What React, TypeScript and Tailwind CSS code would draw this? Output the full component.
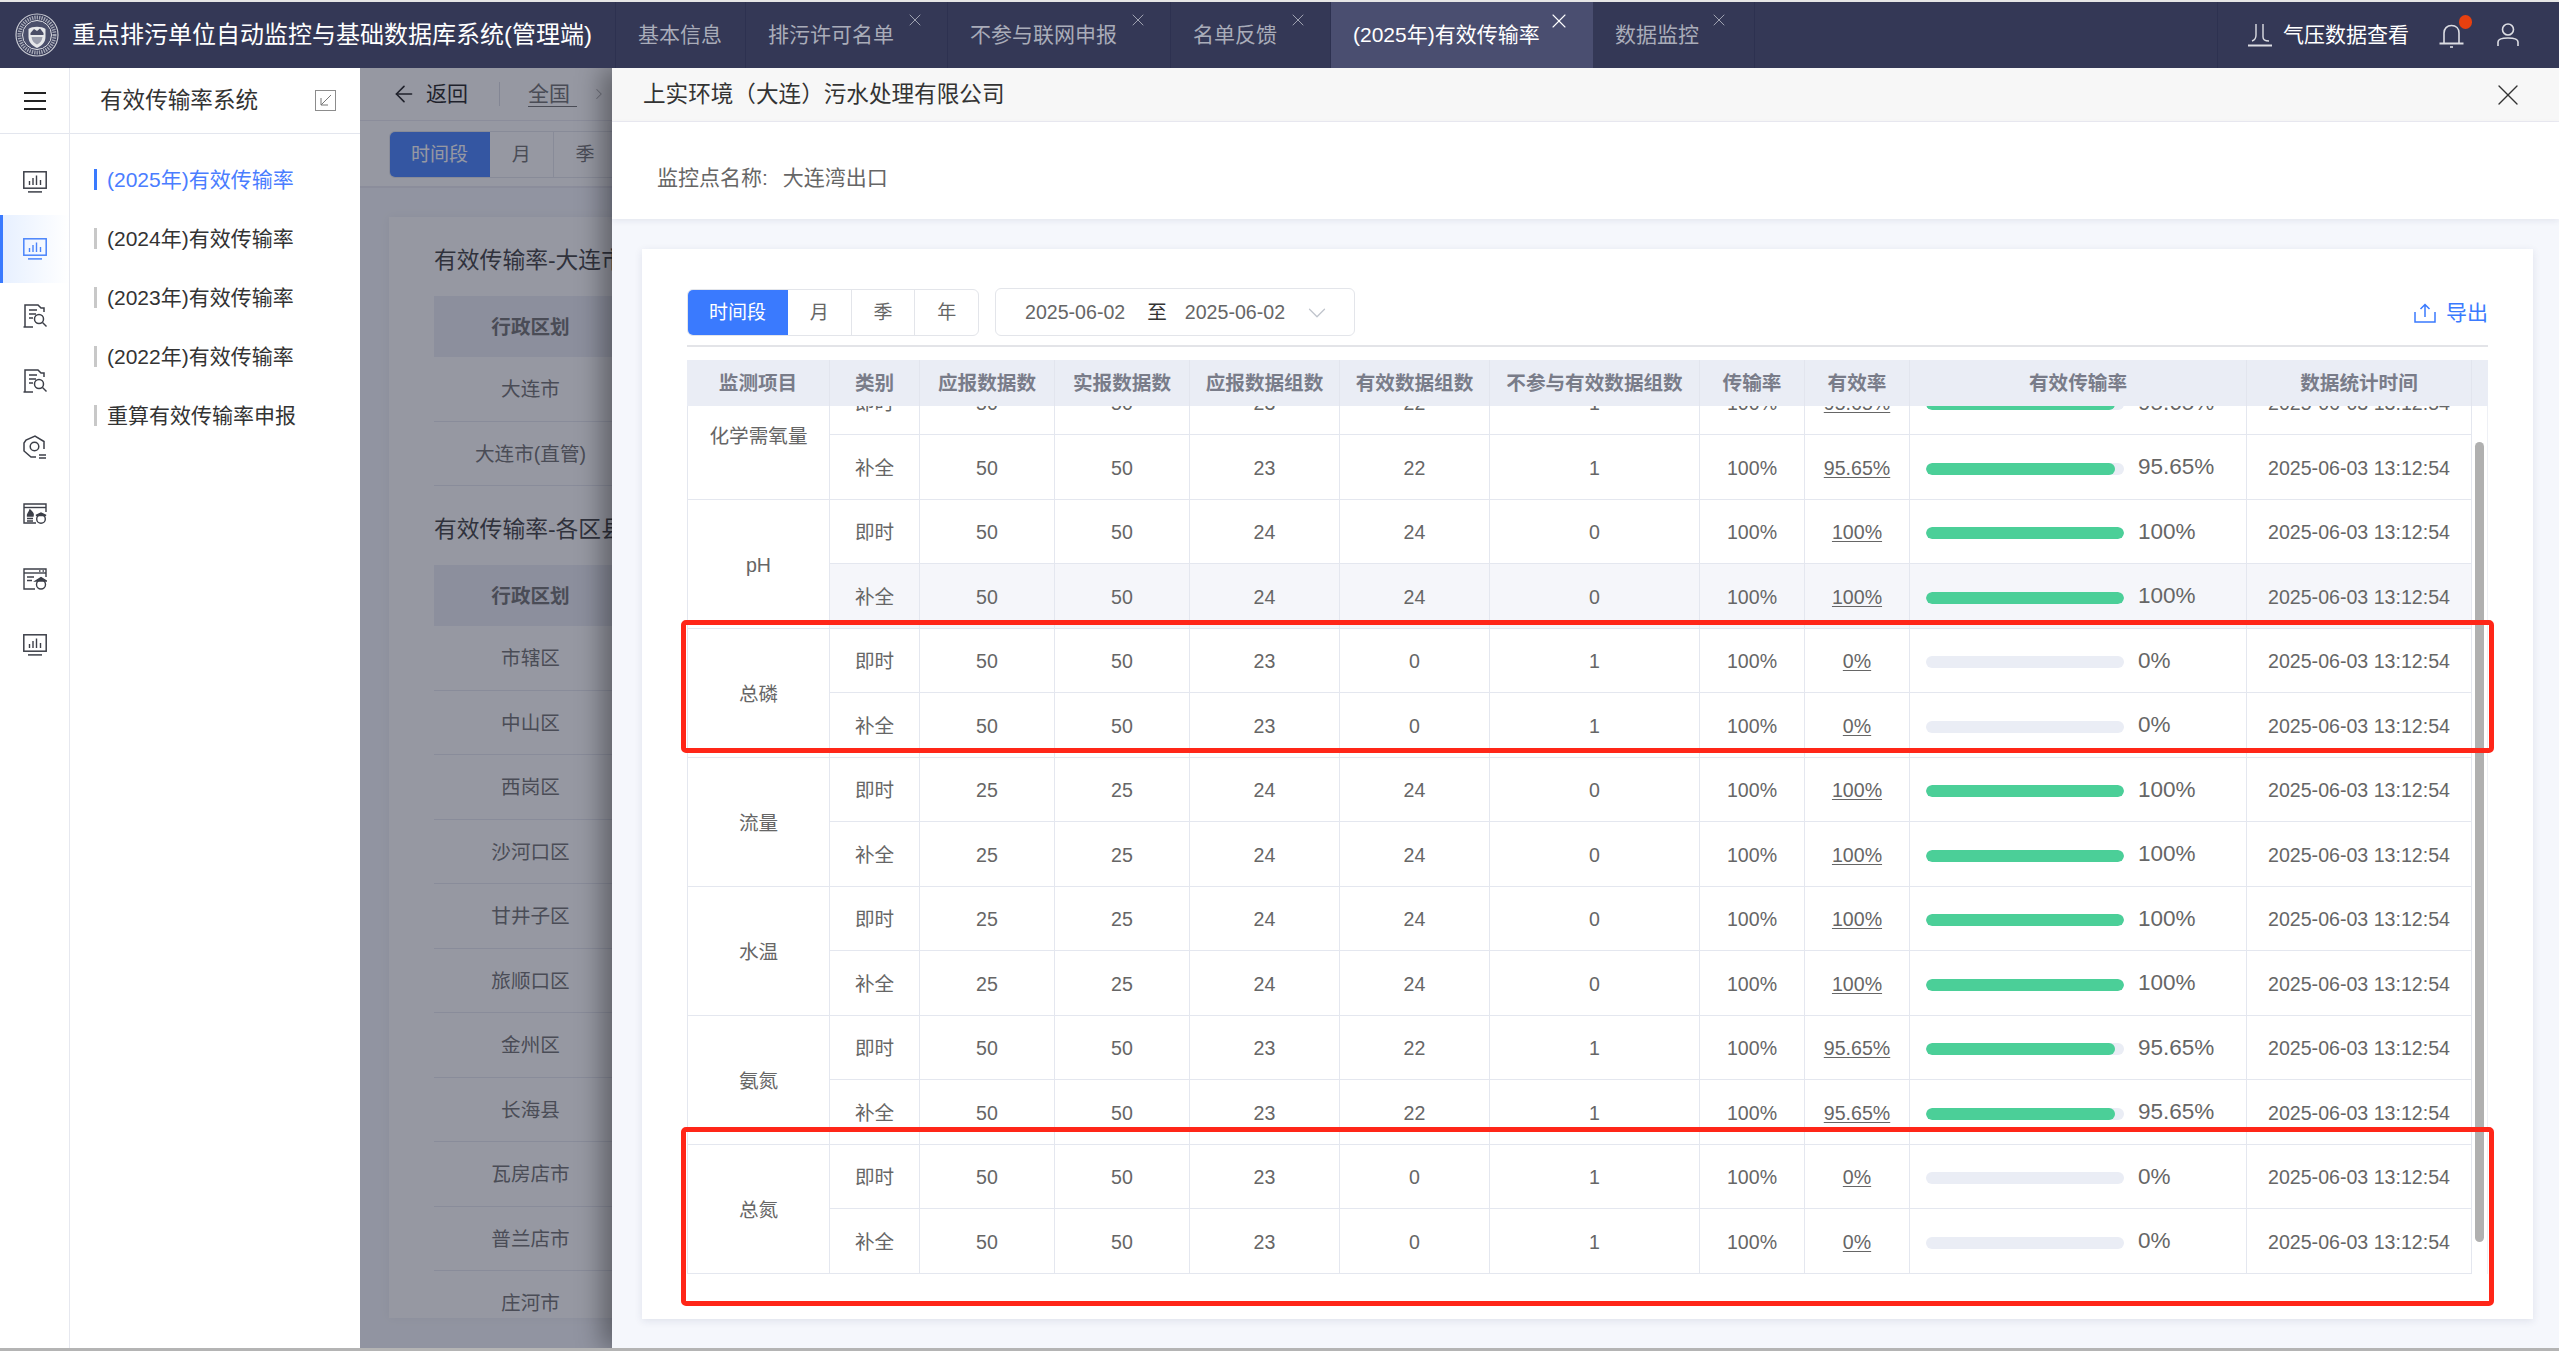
import { X, ArrowLeft, ChevronRight, ChevronDown } from 'lucide-react';

const tabs = [
  { name: '基本信息', w: 'w-[130px]', closable: false },
  { name: '排污许可名单', w: 'w-[202px]', closable: true, closeX: 'left-[159px]' },
  { name: '不参与联网申报', w: 'w-[223px]', closable: true, closeX: 'left-[180px]' },
  { name: '名单反馈', w: 'w-[160px]', closable: true, closeX: 'left-[117px]' },
  { name: '(2025年)有效传输率', w: 'w-[262px]', closable: true, closeX: 'left-[216px]', active: true },
  { name: '数据监控', w: 'w-[162px]', closable: true, closeX: 'left-[116px]' },
];

const menus = ['(2025年)有效传输率', '(2024年)有效传输率', '(2023年)有效传输率', '(2022年)有效传输率', '重算有效传输率申报'];

const groups = [
  { name: '化学需氧量', a: 50, b: 23, c: 22, d: 1, rate: '95.65%', pct: 95.65 },
  { name: 'pH', a: 50, b: 24, c: 24, d: 0, rate: '100%', pct: 100 },
  { name: '总磷', a: 50, b: 23, c: 0, d: 1, rate: '0%', pct: 0 },
  { name: '流量', a: 25, b: 24, c: 24, d: 0, rate: '100%', pct: 100 },
  { name: '水温', a: 25, b: 24, c: 24, d: 0, rate: '100%', pct: 100 },
  { name: '氨氮', a: 50, b: 23, c: 22, d: 1, rate: '95.65%', pct: 95.65 },
  { name: '总氮', a: 50, b: 23, c: 0, d: 1, rate: '0%', pct: 0 },
];

const heads = ['监测项目', '类别', '应报数据数', '实报数据数', '应报数据组数', '有效数据组数', '不参与有效数据组数', '传输率', '有效率', '有效传输率', '数据统计时间'];

const districts = ['市辖区', '中山区', '西岗区', '沙河口区', '甘井子区', '旅顺口区', '金州区', '长海县', '瓦房店市', '普兰店市', '庄河市'];

function Cols() {
  return (
    <colgroup>
      <col className="w-[143px]" />
      <col className="w-[90px]" />
      <col className="w-[135px]" />
      <col className="w-[135px]" />
      <col className="w-[150px]" />
      <col className="w-[150px]" />
      <col className="w-[210px]" />
      <col className="w-[105px]" />
      <col className="w-[105px]" />
      <col className="w-[337px]" />
      <col className="w-[225px]" />
    </colgroup>
  );
}

function Logo() {
  return (
    <svg viewBox="0 0 44 44" className="w-[44px] h-[44px] ml-[15px] shrink-0" fill="none">
      <circle cx="22" cy="22" r="21" stroke="#c9cbd3" strokeWidth="1.2" />
      <circle cx="22" cy="22" r="17.5" stroke="#a4a7b5" strokeWidth="4" strokeDasharray="1.4 1" />
      <circle cx="22" cy="22" r="14.5" fill="#4b4f6b" stroke="#e2e3e8" strokeWidth="1" />
      <path d="M13.5 16 C17 13 27 13 30.5 16 V24 C30.5 30 26 33 22 35 C18 33 13.5 30 13.5 24 Z" fill="#e6e7ea" />
      <path d="M15.5 20 L19 16 L22 18 L25 15.5 L28.5 20 V22 H15.5 Z" fill="#4a4d66" />
      <path d="M16.5 24 H27.5 C27 28 25 30 22 31.5 C19 30 17 28 16.5 24 Z" fill="#9a9dac" />
    </svg>
  );
}

function MonitorIcon({ color = '#3c3f48' }: { color?: string }) {
  return (
    <svg viewBox="0 0 24 22" className="w-[24px] h-[22px]" fill="none" stroke={color}>
      <rect x="0.8" y="0.8" width="22.4" height="16.4" strokeWidth="1.5" />
      <path d="M5 20.9 H19" strokeWidth="1.5" />
      <path d="M6.5 14 V10 M10 14 V7 M13.5 14 V4.5 M17.5 14 V9" strokeWidth="1.4" />
    </svg>
  );
}

function DocSearchIcon() {
  return (
    <svg viewBox="0 0 24 24" className="w-[24px] h-[24px]" fill="none" stroke="#3c3f48" strokeWidth="1.5">
      <path d="M2 23 V1 H15 L18 4 H21 V8" />
      <path d="M0.5 23 H10" />
      <path d="M6 6 H14 M6 10 H13 M6 14 H10" />
      <circle cx="16" cy="15" r="4.5" />
      <path d="M19.5 18.5 L23.5 22.5" />
    </svg>
  );
}

function HexIcon() {
  return (
    <svg viewBox="0 0 24 24" className="w-[24px] h-[24px]" fill="none" stroke="#3c3f48" strokeWidth="1.5">
      <path d="M21 14 V6.5 L12 1 L3 5 L1 8 V16 L8 22 H13" />
      <circle cx="11.5" cy="11.5" r="4.3" />
      <path d="M16 20 H23 M16 23 H23" />
    </svg>
  );
}

function FireIcon() {
  return (
    <svg viewBox="0 0 24 21" className="w-[24px] h-[21px]" fill="none" stroke="#3c3f48" strokeWidth="1.4">
      <path d="M13 20 H1 V1 H23 V9" />
      <path d="M1 4.5 H23" />
      <path d="M7 7 C9 9 11 10 10 13 H4.5 C4 11 6 10 7 7 Z" fill="#3c3f48" />
      <path d="M4 15.5 H10 M4 18 H10" />
      <circle cx="18" cy="16" r="4.3" />
      <path d="M13 12.5 H23 L18 10 Z" fill="#3c3f48" />
    </svg>
  );
}

function FormIcon() {
  return (
    <svg viewBox="0 0 24 22" className="w-[24px] h-[22px]" fill="none" stroke="#3c3f48" strokeWidth="1.4">
      <path d="M12 21 H1 V1 H23 V9" />
      <path d="M1 5 H23" />
      <path d="M16 3 H17.5 M19.5 3 H21" />
      <path d="M4 9 H11 M4 12.5 H9" />
      <circle cx="18" cy="16.5" r="4.5" />
      <path d="M12.5 13 H23.5 L18 9.5 Z" fill="#3c3f48" />
    </svg>
  );
}

function Bar({ pct, label }: { pct: number; label: string }) {
  return (
    <div className="flex items-center pl-[16px]">
      <div className="w-[198px] h-[12px] rounded-[6px] bg-[#eaedf5] overflow-hidden">
        <div className="h-full rounded-[6px] bg-[#4bcf98]" style={{ width: `${pct}%` }} />
      </div>
      <span className="ml-[14px] text-[22.5px] -mt-[2px] leading-none">{label}</span>
    </div>
  );
}

function DataRow({ g, kind, index, striped }: { g: (typeof groups)[number]; kind: string; index: number; striped?: boolean }) {
  const td = `pt-[3px] border-b-[1.5px] border-r border-[#e4e7ef] text-center ${striped ? 'bg-[#f5f6fa]' : ''} ${index % 2 === 0 ? 'h-[64px]' : 'h-[65px]'}`;
  return (
    <tr>
      {kind === '即时' && (
        <td rowSpan={2} className="pt-[3px] border-b-[1.5px] border-r border-l border-[#e4e7ef] text-center">
          {g.name}
        </td>
      )}
      <td className={td}>{kind}</td>
      <td className={td}>{g.a}</td>
      <td className={td}>{g.a}</td>
      <td className={td}>{g.b}</td>
      <td className={td}>{g.c}</td>
      <td className={td}>{g.d}</td>
      <td className={td}>100%</td>
      <td className={td}>
        <span className="underline underline-offset-2">{g.rate}</span>
      </td>
      <td className={td + ' !text-left'}>
        <Bar pct={g.pct} label={g.rate} />
      </td>
      <td className={td}>2025-06-03 13:12:54</td>
    </tr>
  );
}

function Segments({ first, rest }: { first: string; rest: string[] }) {
  return (
    <div className="flex h-[47px] w-[292px] rounded-[6px] border border-[#e3e5ea] bg-white overflow-hidden text-[19px] text-[#666]">
      <div className="w-[101px] -ml-px pt-[2px] flex items-center justify-center bg-[#3a7afe] text-white">{first}</div>
      {rest.map((s, i) => (
        <div key={s} className={`flex-1 pt-[2px] flex items-center justify-center ${i > 0 ? 'border-l border-[#e3e5ea]' : ''}`}>
          {s}
        </div>
      ))}
    </div>
  );
}

function BackPage() {
  return (
    <div className="w-[2199px] h-full flex flex-col bg-[#f5f7fc] text-[#333]">
      <div className="h-[53px] bg-white border-b border-[#e8e9f0] flex items-center pl-[31px] shrink-0">
        <ArrowLeft className="w-[26px] h-[26px] text-[#111]" strokeWidth={1.5} />
        <span className="ml-[9px] text-[21px] text-[#111]">返回</span>
        <div className="w-px h-[24px] bg-[#d9dbe2] ml-[31px]" />
        <span className="ml-[28px] text-[21px] text-[#666] border-b border-[#666] pr-[7px] leading-[24px]">全国</span>
        <ChevronRight className="ml-[13px] w-[18px] h-[18px] text-[#aaa]" strokeWidth={1.4} />
      </div>
      <div className="h-[67px] bg-white border-b-2 border-[#e8e9f0] pl-[29px] pt-[10px] shrink-0">
        <Segments first="时间段" rest={['月', '季', '年']} />
      </div>
      <div className="mt-[29px] ml-[29px] mr-[30px] h-[1101px] bg-white shadow-[0_0_10px_rgba(0,0,0,0.06)] overflow-hidden pl-[45px]">
        <div className="h-[79px] flex items-center text-[22.8px] pt-[8px]">有效传输率-大连市</div>
        <div className="w-[1700px] h-[61px] bg-[#eaedf5]">
          <div className="w-[193px] h-full pt-[2px] flex items-center justify-center font-bold text-[19.6px] text-[#666]">行政区划</div>
        </div>
        {['大连市', '大连市(直管)'].map((d) => (
          <div key={d} className="w-[1700px] border-b border-[#e4e7ef] h-[64.5px]">
            <div className="w-[193px] h-full pt-[2px] flex items-center justify-center text-[19.6px] text-[#666]">{d}</div>
          </div>
        ))}
        <div className="h-[79px] flex items-center text-[22.8px] pt-[8px]">有效传输率-各区县</div>
        <div className="w-[1700px] h-[61px] bg-[#eaedf5]">
          <div className="w-[193px] h-full pt-[2px] flex items-center justify-center font-bold text-[19.6px] text-[#666]">行政区划</div>
        </div>
        {districts.map((d) => (
          <div key={d} className="w-[1700px] border-b border-[#e4e7ef] h-[64.5px]">
            <div className="w-[193px] h-full pt-[2px] flex items-center justify-center text-[19.6px] text-[#666]">{d}</div>
          </div>
        ))}
      </div>
    </div>
  );
}

function Drawer() {
  return (
    <div className="absolute left-[252px] top-0 bottom-0 right-0 bg-[#f5f7fc] flex flex-col shadow-[-10px_0_24px_rgba(0,0,0,0.36)]">
      <div className="h-[54px] bg-[#f7f7f7] border-b border-[#ebebf2] flex items-center justify-between pl-[31px] pr-[33px] shrink-0">
        <span className="text-[22.6px] text-[#333]">上实环境（大连）污水处理有限公司</span>
        <X className="w-[36px] h-[36px] text-[#333]" strokeWidth={0.9} />
      </div>
      <div className="h-[97px] bg-white flex items-center pl-[45px] pt-[15px] text-[21px] text-[#666] shrink-0 shadow-[0_2px_6px_rgba(30,40,90,0.08)]">
        <span>监控点名称:</span>
        <span className="ml-[15px]">大连湾出口</span>
      </div>
      <div className="mt-[30px] ml-[30px] mr-[26px] h-[1070px] bg-white shadow-[0_2px_8px_rgba(30,40,90,0.1)] px-[45px] pt-[39px]">
        <div className="flex items-center h-[48px]">
          <Segments first="时间段" rest={['月', '季', '年']} />
          <div className="ml-[16px] w-[360px] h-[48px] rounded-[6px] border border-[#e3e5ea] flex items-center pl-[29px] pt-[2px] text-[19.6px] text-[#666]">
            <span>2025-06-02</span>
            <span className="ml-[22px] text-[#333]">至</span>
            <span className="ml-[18px]">2025-06-02</span>
            <ChevronDown className="ml-[17px] w-[30px] h-[30px] text-[#c0c4cc]" strokeWidth={1} />
          </div>
          <div className="ml-auto pt-[2px] flex items-center text-[21px] text-[#3a7afe]">
            <svg viewBox="0 0 22 20" className="w-[22px] h-[20px]" fill="none" stroke="#3a7afe" strokeWidth="1.5">
              <path d="M11 14 V1.5 M6.5 6 L11 1.5 L15.5 6" />
              <path d="M1 9 V19 H21 V9" />
            </svg>
            <span className="ml-[10px]">导出</span>
          </div>
        </div>
        <div className="mt-[9px] h-[2px] bg-[#e3e4e8]" />
        <div className="mt-[13px] h-[46px] bg-[#eaedf5] relative">
          <table className="table-fixed border-separate border-spacing-0 w-[1785px] text-[19.6px] font-bold text-[#797c89]">
            <Cols />
            <thead>
              <tr>
                {heads.map((h) => (
                  <th key={h} className="h-[46px] pt-[2px] border-r border-[#e2e5ee] text-center font-bold whitespace-nowrap">
                    {h}
                  </th>
                ))}
              </tr>
            </thead>
          </table>
        </div>
        <div className="relative h-[868px] overflow-hidden border-r border-[#eef0f5]">
          <div className="-mt-[35px]">
            <table className="table-fixed border-separate border-spacing-0 w-[1785px] text-[19.6px] text-[#666]">
              <Cols />
              <tbody>
                {groups.map((g, i) => (
                  <>
                    <DataRow key={g.name + '1'} g={g} kind="即时" index={i * 2} />
                    <DataRow key={g.name + '2'} g={g} kind="补全" index={i * 2 + 1} striped={g.name === 'pH'} />
                  </>
                ))}
              </tbody>
            </table>
          </div>
          <div className="absolute right-[3px] top-[36px] bottom-[32px] w-[9px] rounded-[5px] bg-[#b0b0b0]" />
        </div>
      </div>
    </div>
  );
}

export default function App() {
  return (
    <div className="relative w-[2559px] h-[1351px] overflow-hidden flex flex-col bg-white font-['Liberation_Sans','Noto_Sans_CJK_SC',sans-serif]">
      <div className="h-[2px] bg-[#e6e6e6] shrink-0" />
      <header className="h-[66px] bg-[#343856] flex items-center shrink-0">
        <Logo />
        <div className="ml-[13px] w-[543px] text-[24px] text-white whitespace-nowrap">重点排污单位自动监控与基础数据库系统(管理端)</div>
        <nav className="flex h-full border-l border-[#2d3150]">
          {tabs.map((t) => (
            <div
              key={t.name}
              className={`relative h-full flex items-center pl-[22px] text-[21px] whitespace-nowrap ${t.w} ${
                t.active ? 'bg-[#4a4e70] text-white' : 'text-[#a9acb9] border-r border-[#2d3150]'
              }`}
            >
              {t.name}
              {t.closable && (
                <X
                  className={`absolute ${t.closeX} ${t.active ? 'top-[7px] w-[24px] h-[24px] text-white' : 'top-[8px] w-[20px] h-[20px] text-[#a9acb9]'}`}
                  strokeWidth={1.1}
                />
              )}
            </div>
          ))}
        </nav>
        <div className="ml-auto h-full w-[342px] border-l border-[#2d3150] flex items-center pl-[30px]">
          <svg viewBox="0 0 24 24" className="w-[24px] h-[24px]" fill="none" stroke="#dcdde3" strokeWidth="1.4">
            <path d="M8 1 V12 C8 15 7 17 4 18 M15 1 V14 C15 17 17 18 21 18" />
            <path d="M0 22.5 H24" strokeWidth="2" />
          </svg>
          <span className="ml-[11px] text-[21px] text-white">气压数据查看</span>
          <div className="relative ml-[30px] w-[25px] h-[25px]">
            <svg viewBox="0 0 25 25" className="w-[25px] h-[25px]" fill="none" stroke="#dcdde3" strokeWidth="1.6">
              <path d="M5 20 V10 C5 5.5 8 2.5 12.5 2.5 C17 2.5 20 5.5 20 10 V20" />
              <path d="M0.5 20.5 H24.5" strokeWidth="2" />
              <path d="M11 24 H14" />
            </svg>
            <div className="absolute -top-[8px] left-[20px] w-[13px] h-[14px] rounded-full bg-[#e6400f]" />
          </div>
          <svg viewBox="0 0 22 24" className="ml-[33px] w-[22px] h-[24px]" fill="none" stroke="#dcdde3" strokeWidth="1.6">
            <ellipse cx="11" cy="6.5" rx="5.5" ry="5.5" />
            <path d="M1 23 V19 C1 16 4 15 11 15 C18 15 21 16 21 19 V23" />
          </svg>
        </div>
      </header>
      <div className="flex-1 flex min-h-0">
        <aside className="w-[70px] shrink-0 border-r border-[#e6e8ef] bg-white">
          <div className="h-[66px] flex items-center justify-center border-b border-[#e3e6ee]">
            <div className="w-[22px] h-[18px] flex flex-col justify-between">
              <div className="h-[2px] bg-[#222]" />
              <div className="h-[2px] bg-[#222]" />
              <div className="h-[2px] bg-[#222]" />
            </div>
          </div>
          <div className="pt-[15px]">
            <div className="h-[66px] flex items-center justify-center"><MonitorIcon /></div>
            <div className="h-[68px] flex items-center justify-center border-l-[3px] border-[#3a7afe] bg-gradient-to-r from-[#e7f0ff] to-white pr-[3px]"><MonitorIcon color="#4a84fb" /></div>
            <div className="h-[65px] flex items-center justify-center"><DocSearchIcon /></div>
            <div className="h-[66px] flex items-center justify-center"><DocSearchIcon /></div>
            <div className="h-[66px] flex items-center justify-center"><HexIcon /></div>
            <div className="h-[66px] flex items-center justify-center"><FireIcon /></div>
            <div className="h-[66px] flex items-center justify-center"><FormIcon /></div>
            <div className="h-[66px] flex items-center justify-center"><MonitorIcon /></div>
          </div>
        </aside>
        <div className="w-[290px] shrink-0 bg-white">
          <div className="h-[66px] border-b border-[#e3e6ee] flex items-center pl-[30px]">
            <span className="text-[22.6px] text-[#333]">有效传输率系统</span>
            <svg viewBox="0 0 21 21" className="ml-[57px] w-[21px] h-[21px]" fill="none">
              <rect x="0.5" y="0.5" width="20" height="20" stroke="#8c8c8c" />
              <path d="M16 5 L6 15 M6 8 V15 H13" stroke="#777" strokeWidth="1" />
            </svg>
          </div>
          <div className="pt-[16px] pl-[24px]">
            {menus.map((m, i) => (
              <div key={m} className="h-[59px] flex items-center">
                <div className={`w-[3px] h-[21px] ${i === 0 ? 'bg-[#3a7afe]' : 'bg-[#c8c8c8]'}`} />
                <span className={`ml-[10px] text-[21px] whitespace-nowrap ${i === 0 ? 'text-[#4a7dff]' : 'text-[#333]'}`}>{m}</span>
              </div>
            ))}
          </div>
        </div>
        <main className="relative flex-1 min-w-0 overflow-hidden">
          <BackPage />
          <div className="absolute inset-0 bg-[#2d3246]/50" />
          <Drawer />
        </main>
      </div>
      <div className="h-[3px] bg-[#b4b4b4] shrink-0" />
      <div className="absolute left-[681px] top-[620px] w-[1813px] h-[133px] border-[5px] border-[#ff2618] rounded-[5px]" />
      <div className="absolute left-[681px] top-[1127px] w-[1813px] h-[179px] border-[5px] border-[#ff2618] rounded-[5px]" />
    </div>
  );
}
